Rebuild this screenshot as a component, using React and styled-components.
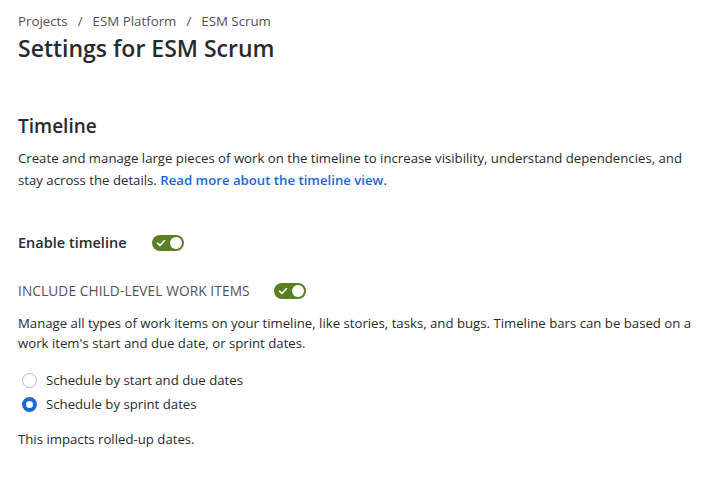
import React, { useState } from 'react';
import styled, { createGlobalStyle } from 'styled-components';

const GlobalStyle = createGlobalStyle`
  body {
    margin: 0;
    background: #ffffff;
    font-family: "Open Sans", "Noto Sans", sans-serif;
    color: #292a2e;
  }
`;

const Page = styled.div`
  padding: 11px 18px 0 18px;
  display: flex;
  flex-direction: column;
`;

const Breadcrumbs = styled.nav`
  display: flex;
  align-items: center;
  gap: 8px;
  font-size: 13.3px;
  line-height: 20px;
  color: #505258;
`;

const Crumb = styled.a`
  color: inherit;
  text-decoration: none;
`;

const Separator = styled.span`
  padding: 0 2px;
`;

const Title = styled.h1`
  margin: 2px 0 0 0;
  font-size: 23px;
  line-height: 30px;
  font-weight: 600;
  color: #292a2e;
`;

const Section = styled.section`
  margin-top: 50px;
`;

const SectionTitle = styled.h2`
  margin: 0;
  font-size: 19px;
  line-height: 26px;
  font-weight: 600;
`;

const Text = styled.p`
  margin: ${p => p.$top || 0}px 0 0 0;
  font-size: 13.2px;
  line-height: ${p => p.$lh || 22}px;
  color: #292a2e;
`;

const Link = styled.a`
  color: #1868db;
  font-weight: 600;
  text-decoration: none;
`;

const ToggleRow = styled.div`
  display: flex;
  align-items: center;
  gap: ${p => p.$gap}px;
  margin-top: ${p => p.$top}px;
`;

const ToggleLabel = styled.span`
  font-size: 14.5px;
  font-weight: 600;
  color: #292a2e;
`;

const CapsLabel = styled.span`
  font-size: 13.7px;
  font-weight: 500;
  color: #505258;
  letter-spacing: 0.1px;
`;

const Track = styled.button`
  width: 32px;
  height: 16px;
  border: none;
  border-radius: 8px;
  padding: 0 2px 0 4px;
  background: ${p => (p.$on ? '#5b7f24' : '#8c8f97')};
  display: flex;
  align-items: center;
  justify-content: space-between;
  cursor: pointer;
`;

const Knob = styled.span`
  width: 12px;
  height: 12px;
  border-radius: 50%;
  background: #ffffff;
`;

const RadioGroup = styled.div`
  display: flex;
  flex-direction: column;
  gap: 4px;
  margin-top: 17px;
`;

const RadioRow = styled.label`
  display: flex;
  align-items: center;
  gap: 9px;
  height: 20px;
  font-size: 13.2px;
  color: #292a2e;
  cursor: pointer;
`;

const RadioDot = styled.span`
  box-sizing: border-box;
  width: 15px;
  height: 15px;
  margin-left: 4px;
  border-radius: 50%;
  border: ${p => (p.$checked ? '4px solid #1868db' : '1px solid #b7b9be')};
  background: #ffffff;
`;

function Toggle({ on, onClick }) {
  return (
    <Track $on={on} onClick={onClick} type="button">
      <svg width="10" height="10" viewBox="0 0 10 10">
        <path d="M1.5 5.2 L4 7.5 L8.5 2.5" fill="none" stroke="#fff" strokeWidth="1.6" strokeLinecap="round" strokeLinejoin="round" />
      </svg>
      <Knob />
    </Track>
  );
}

export default function App() {
  const [enabled, setEnabled] = useState(true);
  const [child, setChild] = useState(true);
  const [mode, setMode] = useState('sprint');

  return (
    <Page>
      <GlobalStyle />
      <Breadcrumbs>
        <Crumb href="#">Projects</Crumb>
        <Separator>/</Separator>
        <Crumb href="#">ESM Platform</Crumb>
        <Separator>/</Separator>
        <Crumb href="#">ESM Scrum</Crumb>
      </Breadcrumbs>
      <Title>Settings for ESM Scrum</Title>

      <Section>
        <SectionTitle>Timeline</SectionTitle>
        <Text $top={8}>
          Create and manage large pieces of work on the timeline to increase visibility, understand dependencies, and
          stay across the details. <Link href="#">Read more about the timeline view</Link>.
        </Text>

        <ToggleRow $gap={25} $top={42}>
          <ToggleLabel>Enable timeline</ToggleLabel>
          <Toggle on={enabled} onClick={() => setEnabled(!enabled)} />
        </ToggleRow>

        <ToggleRow $gap={24} $top={29}>
          <CapsLabel>INCLUDE CHILD-LEVEL WORK ITEMS</CapsLabel>
          <Toggle on={child} onClick={() => setChild(!child)} />
        </ToggleRow>

        <Text $top={13} $lh={20}>
          Manage all types of work items on your timeline, like stories, tasks, and bugs. Timeline bars can be based on a
          work item's start and due date, or sprint dates.
        </Text>

        <RadioGroup>
          <RadioRow onClick={() => setMode('start')}>
            <RadioDot $checked={mode === 'start'} />
            Schedule by start and due dates
          </RadioRow>
          <RadioRow onClick={() => setMode('sprint')}>
            <RadioDot $checked={mode === 'sprint'} />
            Schedule by sprint dates
          </RadioRow>
        </RadioGroup>

        <Text $top={14}>This impacts rolled-up dates.</Text>
      </Section>
    </Page>
  );
}
